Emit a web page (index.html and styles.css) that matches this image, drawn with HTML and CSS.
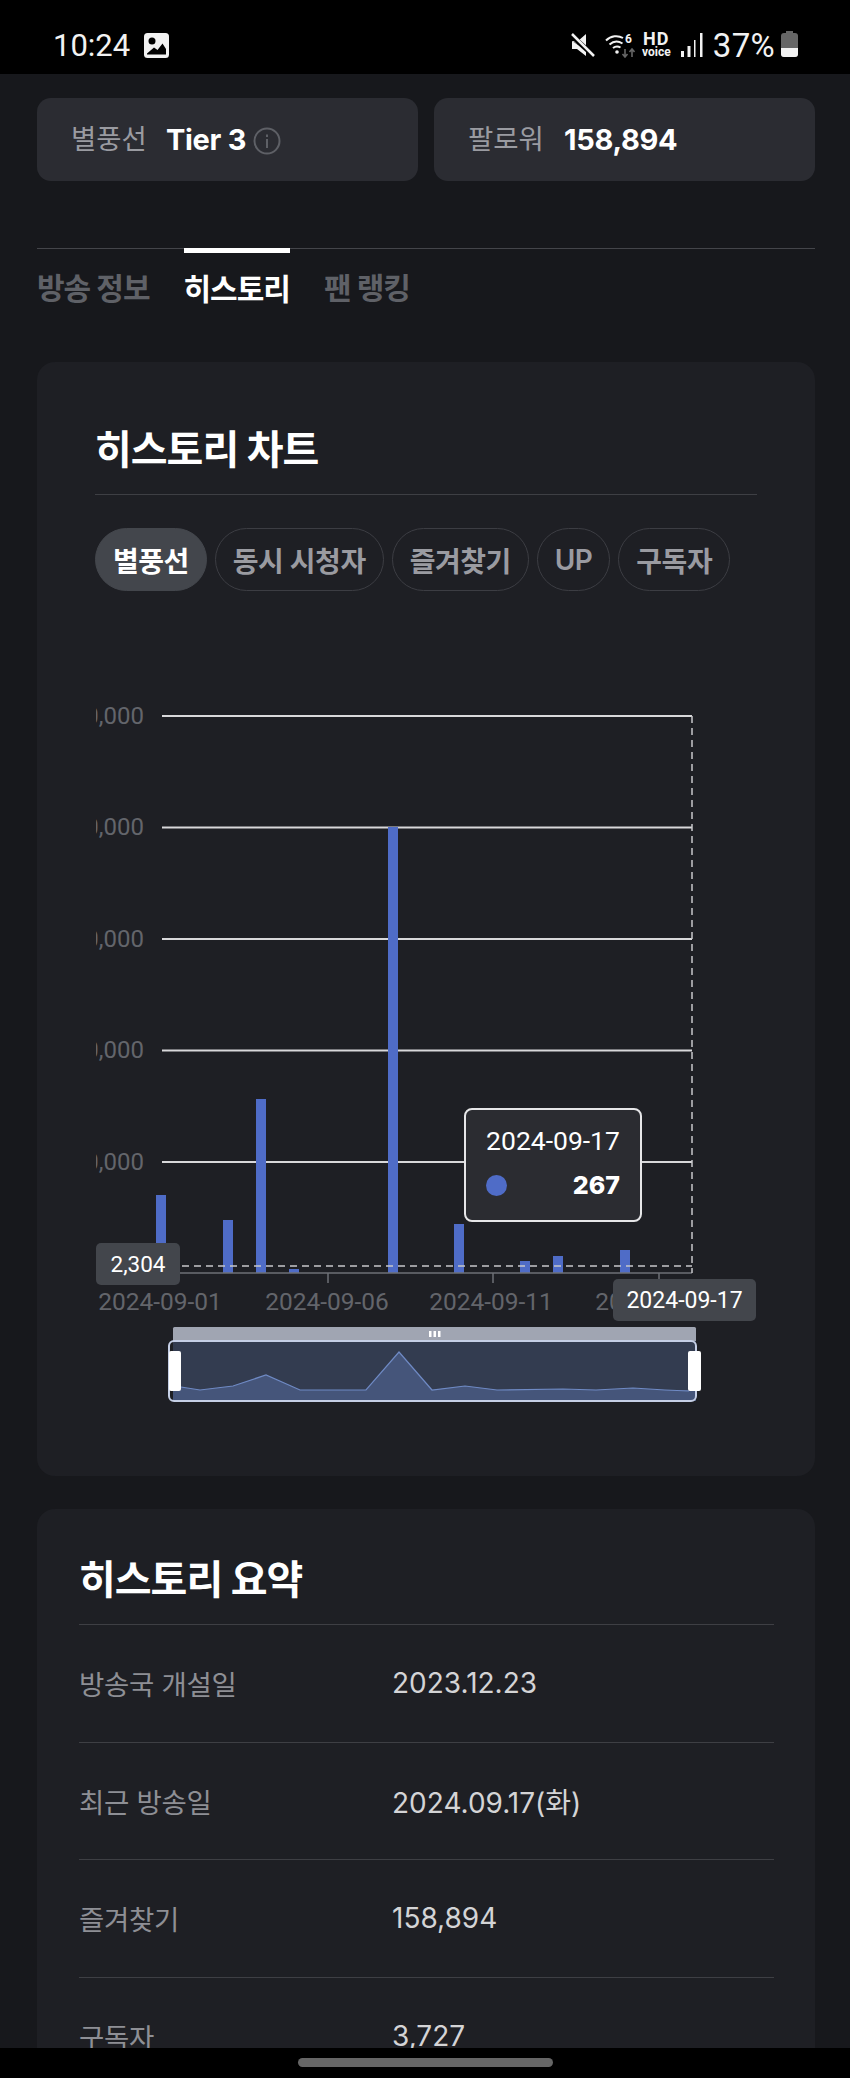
FILE: index.html
```html
<!DOCTYPE html>
<html lang="ko">
<head>
  <meta charset="UTF-8">
  <title>히스토리</title>
  <link rel="stylesheet" href="styles.css">
</head>
<body>

<div class="status-bar">
  <div class="status-left">
    <span class="clock">10:24</span>
    <svg class="icon-gallery" viewBox="0 0 25 25">
      <rect width="25" height="25" rx="3.5" fill="#f2f2f2"/>
      <circle cx="8" cy="8" r="3.500" fill="#000"/>
      <path d="M3 21.500v-1L10 14.500l3.500 2.500 5-6.500L22 16v5.500z" fill="#000"/>
    </svg>
  </div>
  <div class="status-right">
    <svg class="icon-mute" viewBox="0 0 24 24">
      <path d="M1 8h6l8-7v15z" fill="#f2f2f2"/>
      <path d="M1 8v8h5l9 7v-6z" fill="#f2f2f2"/>
      <path d="M0 2l23 21" stroke="#000" stroke-width="5"/>
      <path d="M1 1l22 22" stroke="#f2f2f2" stroke-width="2.500"/>
    </svg>
    <svg class="icon-wifi" viewBox="0 0 30 26">
      <path d="M1 8.500c5-5 12-5.500 17-2.500M4.500 12.500c4-3.500 9-3.500 13-1M8 16c2.500-2 5-2 7.500-.5" fill="none" stroke="#f2f2f2" stroke-width="2"/>
      <circle cx="12" cy="20" r="1.800" fill="#f2f2f2"/>
      <text class="wifi-six" x="20" y="11">6</text>
      <path d="M20 17v8m-2.500-3l2.500 3 2.500-3" fill="none" stroke="#666" stroke-width="1.600"/>
      <path d="M27 25v-8m-2.500 3l2.500-3 2.500 3" fill="none" stroke="#666" stroke-width="1.600"/>
    </svg>
    <div class="hd-voice">
      <span class="hd">HD</span>
      <span class="voice">voice</span>
    </div>
    <svg class="icon-signal" viewBox="0 0 22 24">
      <rect x="0" y="18" width="3" height="6" fill="#f2f2f2"/>
      <rect x="6.500" y="13" width="3" height="11" fill="#f2f2f2"/>
      <rect x="13" y="7" width="1.500" height="17" fill="#f2f2f2"/>
      <rect x="19" y="0" width="2.500" height="24" fill="#f2f2f2"/>
    </svg>
    <span class="battery-text">37%</span>
    <div class="battery"><div class="battery-level"></div></div>
  </div>
</div>

<div class="stats">
  <div class="stat-card">
    <span class="stat-label">별풍선</span>
    <span class="stat-value">Tier 3</span>
    <svg class="icon-info" viewBox="0 0 28 28">
      <circle cx="14" cy="14" r="12.500" fill="none" stroke="#5e6066" stroke-width="2"/>
      <rect x="13" y="12" width="2" height="9" fill="#5e6066"/>
      <rect x="13" y="7.500" width="2" height="2.500" fill="#5e6066"/>
    </svg>
  </div>
  <div class="stat-card">
    <span class="stat-label">팔로워</span>
    <span class="stat-value">158,894</span>
  </div>
</div>

<div class="tabs">
  <div class="tab">방송 정보</div>
  <div class="tab active">히스토리</div>
  <div class="tab">팬 랭킹</div>
</div>

<div class="card chart-card">
  <h2 class="card-title">히스토리 차트</h2>
  <div class="chips">
    <span class="chip active">별풍선</span>
    <span class="chip">동시 시청자</span>
    <span class="chip">즐겨찾기</span>
    <span class="chip">UP</span>
    <span class="chip">구독자</span>
  </div>

  <div class="chart">
    <svg class="chart-svg" viewBox="96 700 661 710">
      <!-- 그리드 -->
      <g class="grid">
        <line x1="162" y1="716" x2="692" y2="716"/>
        <line x1="162" y1="827.500" x2="692" y2="827.500"/>
        <line x1="162" y1="939" x2="692" y2="939"/>
        <line x1="162" y1="1050.500" x2="692" y2="1050.500"/>
        <line x1="162" y1="1162" x2="692" y2="1162"/>
      </g>
      <g class="y-labels">
        <text x="144" y="724">50,000</text>
        <text x="144" y="835">40,000</text>
        <text x="144" y="947">30,000</text>
        <text x="144" y="1058">20,000</text>
        <text x="144" y="1170">10,000</text>
      </g>
      <!-- 막대 -->
      <g class="bars">
        <rect x="156" y="1195" width="10" height="78"/>
        <rect x="223" y="1220" width="10" height="53"/>
        <rect x="256" y="1099" width="10" height="174"/>
        <rect x="289" y="1269" width="10" height="4"/>
        <rect x="388" y="827" width="10" height="446"/>
        <rect x="454" y="1224" width="10" height="49"/>
        <rect x="520" y="1261" width="10" height="12"/>
        <rect x="553" y="1256" width="10" height="17"/>
        <rect x="620" y="1250" width="10" height="23"/>
      </g>
      <!-- 축 -->
      <g class="axis">
        <line x1="162" y1="1273" x2="692" y2="1273"/>
        <line x1="328" y1="1273" x2="328" y2="1283"/>
        <line x1="493" y1="1273" x2="493" y2="1283"/>
        <line x1="659" y1="1273" x2="659" y2="1283"/>
      </g>
      <g class="x-labels">
        <text x="160" y="1310">2024-09-01</text>
        <text x="327" y="1310">2024-09-06</text>
        <text x="491" y="1310">2024-09-11</text>
        <text x="657" y="1310">2024-09-16</text>
      </g>
      <g class="crosshair">
        <line x1="170" y1="1266" x2="692" y2="1266"/>
        <line x1="692" y1="716" x2="692" y2="1273"/>
      </g>
      <!-- 슬라이더 -->
      <rect class="zoom-bar" x="173" y="1327" width="523" height="15" rx="1.500"/>
      <rect class="zoom-grip" x="429" y="1331" width="2.500" height="6"/>
      <rect class="zoom-grip" x="433.500" y="1331" width="2.500" height="6"/>
      <rect class="zoom-grip" x="438" y="1331" width="2.500" height="6"/>
      <rect class="zoom-window" x="173" y="1341" width="523" height="60"/>
      <path class="zoom-area" d="M181 1387L200 1390 233 1386 266 1375 300 1390 366 1390 399 1352 432 1390 465 1386 497 1390 563 1389 596 1390 633 1388 665 1390 696 1390V1401H173V1387z"/>
      <path class="zoom-line" d="M181 1387L200 1390 233 1386 266 1375 300 1390 366 1390 399 1352 432 1390 465 1386 497 1390 563 1389 596 1390 633 1388 665 1390 689 1391"/>
      <rect class="zoom-border" x="169" y="1341" width="527" height="60" rx="5"/>
      <rect class="zoom-handle" x="169" y="1351" width="12" height="40" rx="2"/>
      <rect class="zoom-handle" x="688" y="1351" width="13" height="40" rx="2"/>
    </svg>

    <div class="axis-badge y-badge">2,304</div>
    <div class="axis-badge x-badge">2024-09-17</div>
    <div class="chart-tooltip">
      <div class="tooltip-date">2024-09-17</div>
      <div class="tooltip-row">
        <span class="tooltip-dot"></span>
        <span class="tooltip-value">267</span>
      </div>
    </div>
  </div>
</div>

<div class="card summary-card">
  <h2 class="card-title">히스토리 요약</h2>
  <div class="summary-row"><span class="summary-label">방송국 개설일</span><span class="summary-value">2023.12.23</span></div>
  <div class="summary-row"><span class="summary-label">최근 방송일</span><span class="summary-value">2024.09.17(화)</span></div>
  <div class="summary-row"><span class="summary-label">즐겨찾기</span><span class="summary-value">158,894</span></div>
  <div class="summary-row"><span class="summary-label">구독자</span><span class="summary-value">3,727</span></div>
</div>

<div class="nav-bar"><div class="nav-pill"></div></div>

</body>
</html>
```

FILE: styles.css
```css
* {
  box-sizing: border-box;
}

html, body {
  height: 2078px;
  overflow: hidden;
}

body {
  margin: 0;
  position: relative;
  background-color: #17181c;
  color: #fff;
  font-family: Inter, 'Noto Sans CJK KR', sans-serif;
}

/* 상태바 */
.status-bar {
  height: 74px;
  background-color: #000;
  color: #f2f2f2;
  font-family: Roboto, sans-serif;
  display: flex;
  justify-content: space-between;
  align-items: center;
  padding: 16px 52px 0 53px;
}

.status-left,
.status-right {
  display: flex;
  align-items: center;
}

.clock {
  font-size: 31px;
}

.icon-gallery {
  width: 25px;
  height: 25px;
  margin-left: 14px;
}

.icon-mute {
  width: 24px;
  height: 24px;
}

.icon-wifi {
  width: 30px;
  height: 26px;
  margin-left: 10px;
}

.wifi-six {
  font-size: 12px;
  font-weight: 700;
  fill: #f2f2f2;
}

.hd-voice {
  display: flex;
  flex-direction: column;
  align-items: center;
  margin-left: 8px;
  width: 27px;
}

.hd {
  font-size: 18px;
  font-weight: 700;
  line-height: 14px;
  letter-spacing: 1px;
}

.voice {
  font-size: 12px;
  font-weight: 700;
  line-height: 12px;
}

.icon-signal {
  width: 22px;
  height: 24px;
  margin-left: 11px;
}

.battery-text {
  font-size: 33px;
  margin-left: 10px;
  letter-spacing: 0.3px;
}

.battery {
  width: 17px;
  height: 24px;
  margin-left: 6px;
  background-color: #666;
  border-radius: 3px;
  position: relative;
  display: flex;
  align-items: flex-end;
}

.battery::before {
  content: "";
  position: absolute;
  top: -2px;
  left: 5px;
  width: 7px;
  height: 3px;
  background-color: #666;
}

.battery-level {
  width: 100%;
  height: 9px;
  background-color: #f2f2f2;
  border-radius: 0 0 3px 3px;
}

/* 상단 카드 */
.stats {
  display: flex;
  gap: 16px;
  margin: 24px 35px 0 37px;
}

.stat-card {
  flex: 1;
  height: 83px;
  background-color: #2b2c32;
  border-radius: 14px;
  display: flex;
  align-items: center;
  padding: 0 0 0 34px;
}

.stat-label {
  font-size: 27.500px;
  color: #9a9ba1;
  line-height: 1;
  width: 95px;
}

.stat-card + .stat-card .stat-label {
  width: 96px;
}

.stat-value {
  font-size: 29px;
  font-weight: 700;
  letter-spacing: -0.3px;
}

.icon-info {
  width: 28px;
  height: 28px;
  margin: 2px 0 0 7px;
}

/* 탭 */
.tabs {
  display: flex;
  gap: 34px;
  margin: 67px 35px 0 37px;
  border-top: 1px solid #44454a;
  height: 114px;
}

.tab {
  font-size: 30px;
  font-weight: 700;
  color: #5f6167;
  line-height: 40px;
  padding-top: 20px;
  margin-top: -1px;
  letter-spacing: -1px;
}

.tab.active {
  color: #fff;
  border-top: 5px solid #fff;
  padding-top: 16px;
  height: 61px;
}

/* 카드 */
.card {
  background-color: #1e1f24;
  border-radius: 18px;
  margin: 0 35px 0 37px;
}

.card-title {
  margin: 0;
  font-size: 40px;
  font-weight: 700;
  line-height: 50px;
  letter-spacing: -1px;
  border-bottom: 1px solid #3e3f44;
  padding-bottom: 19px;
}

.chart-card {
  height: 1114px;
  padding: 63px 58px 0 58px;
}

.chips {
  display: flex;
  gap: 8px;
  margin-top: 33px;
}

.chip {
  height: 63px;
  border: 1.5px solid #3c3d43;
  border-radius: 32px;
  padding: 0 17px;
  display: flex;
  align-items: center;
  font-size: 28px;
  font-weight: 600;
  color: #9a9ba1;
  letter-spacing: -0.5px;
}

.chip.active {
  background-color: #43464c;
  border-color: #43464c;
  color: #fff;
  font-weight: 700;
}

.chart {
  position: relative;
  margin-top: 109px;
  height: 710px;
}

.chart-svg {
  display: block;
  width: 661px;
  height: 710px;
  margin-left: 1px;
}

.grid line {
  stroke: #d8d8da;
  stroke-width: 2;
}

.y-labels text {
  font-family: Roboto, sans-serif;
  font-size: 24px;
  fill: #63656b;
  text-anchor: end;
}

.bars rect {
  fill: #4f6cc7;
}

.axis line {
  stroke: #6e7076;
  stroke-width: 1.500;
}

.x-labels text {
  font-family: Roboto, sans-serif;
  font-size: 24.500px;
  fill: #63656b;
  text-anchor: middle;
}

.crosshair line {
  stroke: #c8c8ca;
  stroke-width: 1.500;
  stroke-dasharray: 7 5;
}

.zoom-bar {
  fill: #a0a5b2;
}

.zoom-grip {
  fill: #fff;
}

.zoom-window {
  fill: #333c50;
}

.zoom-area {
  fill: #45557a;
}

.zoom-line {
  fill: none;
  stroke: #6f8ac4;
  stroke-width: 1.200;
}

.zoom-border {
  fill: none;
  stroke: #c5cfe6;
  stroke-width: 2;
}

.zoom-handle {
  fill: #fff;
}

.axis-badge {
  position: absolute;
  background-color: #43464c;
  border-radius: 5px;
  font-family: Roboto, sans-serif;
  display: flex;
  align-items: center;
  justify-content: center;
}

.y-badge {
  left: 1px;
  top: 543px;
  width: 84px;
  height: 42px;
  font-size: 22.500px;
}

.x-badge {
  left: 518px;
  top: 579px;
  width: 143px;
  height: 42px;
  font-size: 23px;
}

.chart-tooltip {
  position: absolute;
  left: 369px;
  top: 408px;
  width: 178px;
  height: 114px;
  background-color: #2b2c31;
  border: 2px solid #e6e6e8;
  border-radius: 8px;
  padding: 0 20px;
}

.tooltip-date {
  font-family: Roboto, sans-serif;
  font-size: 26.500px;
  line-height: 30px;
  margin-top: 16px;
  text-align: center;
  white-space: nowrap;
}

.tooltip-row {
  display: flex;
  justify-content: space-between;
  align-items: center;
  margin-top: 14px;
  height: 30px;
}

.tooltip-dot {
  width: 21px;
  height: 21px;
  border-radius: 50%;
  background-color: #4f6cc7;
}

.tooltip-value {
  font-size: 25px;
  font-weight: 800;
}

/* 요약 */
.summary-card {
  margin-top: 33px;
  padding: 46px 41px 0 42px;
}

.summary-row {
  display: flex;
  align-items: center;
  height: 117.500px;
  border-bottom: 1px solid #3e3f44;
}

.summary-label {
  width: 313px;
  font-size: 27.500px;
  color: #8e8f95;
  letter-spacing: -0.3px;
}

.summary-value {
  font-size: 28px;
  color: #d4d4d6;
}

/* 하단 내비 */
.nav-bar {
  position: absolute;
  left: 0;
  right: 0;
  bottom: 0;
  height: 30px;
  background-color: #000;
  display: flex;
  justify-content: center;
  padding-top: 10px;
}

.nav-pill {
  width: 255px;
  height: 9px;
  border-radius: 5px;
  background-color: #666;
}
```
